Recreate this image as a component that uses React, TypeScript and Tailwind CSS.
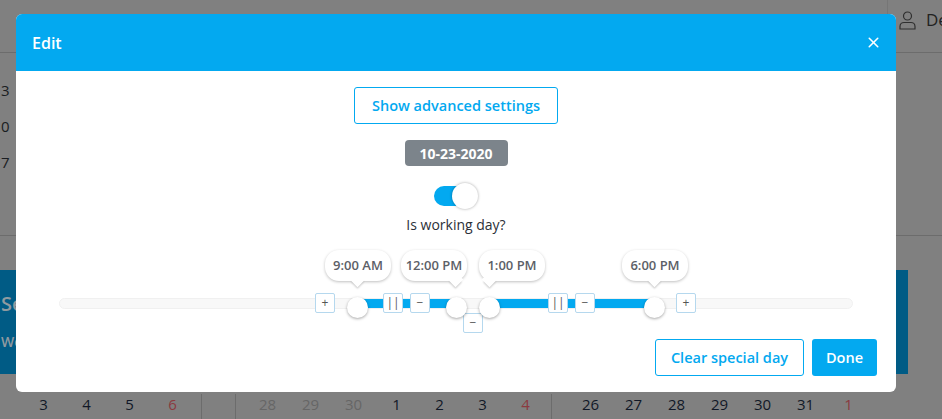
import { X } from "lucide-react";

const weekA = ["3", "0", "7"];
const daysLeft = [
  { n: "2", x: "left-[-2px]" },
  { n: "3", x: "left-[38px]" },
  { n: "4", x: "left-[81px]" },
  { n: "5", x: "left-[124px]" },
];

function Day({ n, cls }: { n: string; cls?: string }) {
  return <span className={"w-[43px] text-center " + (cls ?? "text-[#111827]")}>{n}</span>;
}

function Background() {
  return (
    <div className="flex h-[419px] w-[942px] flex-col overflow-hidden bg-[#808080] text-[15px] text-[#1a1d22]">
      <div className="flex h-[53px] justify-end border-b border-[#6c6c6c]">
        <div className="flex w-[55px] items-start gap-[10px] border-l border-[#767676] pl-[11px] pt-[10px]">
          <svg width="17" height="19" viewBox="0 0 17 19" fill="none" stroke="#2f2f2f" strokeWidth="1.2" className="mt-px shrink-0">
            <circle cx="8.5" cy="5" r="4" />
            <path d="M1 18v-2.5C1 13 3 11.5 5 11.5h7c2 0 4 1.5 4 4V18Z" />
          </svg>
          <span className="text-[17px] leading-[20px] text-[#222]">De</span>
        </div>
      </div>
      <div className="flex h-[183px] flex-col gap-[15px] pt-[27px] border-b border-[#6c6c6c]">
        {weekA.map((d) => (
          <span key={d} className="pl-px leading-[21px]">{d}</span>
        ))}
      </div>
      <div className="h-[34px]" />
      <div className="flex h-[104px] bg-[#005b85]">
        <div className="flex flex-col pl-px pt-[22px] font-semibold text-[#8f9aa0]">
          <span className="text-[20px] leading-[24px]">Se</span>
          <span className="mt-[17px] text-[14px] leading-[18px]">We</span>
        </div>
        <div className="ml-auto h-full w-[34px] bg-[#808080]" />
      </div>
      <div className="flex h-[45px] pt-[20px] leading-[20px]">
        <div className="flex w-[202px] shrink-0 border-r border-[#6c6c6c] pl-[-2px]">
          <Day n="3" cls="ml-[22px] text-[#111827]" />
          <Day n="4" />
          <Day n="5" />
          <Day n="6" cls="text-[#8b3a3f]" />
        </div>
        <div className="flex w-[34px] shrink-0 border-r border-[#6c6c6c]" />
        <div className="flex w-[315px] shrink-0 pl-[10px] text-[#111827]">
          <Day n="28" cls="text-[#666]" />
          <Day n="29" cls="text-[#666]" />
          <Day n="30" cls="text-[#666]" />
          <Day n="1" />
          <Day n="2" />
          <Day n="3" />
          <Day n="4" cls="text-[#8b3a3f]" />
        </div>
        <div className="flex w-[356px] shrink-0 border-l border-[#6c6c6c] pl-[17px] text-[#666]">
          <Day n="26" />
          <Day n="27" />
          <Day n="28" />
          <Day n="29" />
          <Day n="30" />
          <Day n="31" />
          <Day n="1" cls="text-[#8b3a3f]" />
        </div>
      </div>
    </div>
  );
}

function StepButton({ label, x, y }: { label: string; x: string; y: string }) {
  return (
    <button className={"absolute flex h-5 w-5 items-center justify-center rounded-[2px] border border-[#b5d8ee] bg-white text-[12px] font-normal text-[#555] " + x + " " + y}>
      {label}
    </button>
  );
}

function Handle({ x }: { x: string }) {
  return <div className={"absolute top-[283px] h-[21px] w-[21px] rounded-full bg-white shadow-[0_1px_3px_rgba(0,0,0,0.35)] " + x} />;
}

function Bubble({ label, x, tail }: { label: string; x: string; tail: string }) {
  return (
    <div className={"absolute top-[236px] flex h-[31px] w-[66px] items-center justify-center rounded-[14px] bg-white text-[13px] font-semibold text-[#5c6067] shadow-[0_1px_3px_rgba(0,0,0,0.25)] " + x}>
      {label}
      <span className={"absolute top-[24px] h-[11px] w-[11px] rotate-45 bg-white shadow-[2px_2px_2px_-1px_rgba(0,0,0,0.2)] " + tail} />
      <span className="absolute inset-x-3 top-[20px] h-[10px] bg-white" />
    </div>
  );
}

export default function App() {
  return (
    <div className="relative h-[419px] w-[942px] overflow-hidden font-['Open_Sans',sans-serif]">
      <Background />
      {/* modal */}
      <div className="absolute left-[16px] top-[14px] h-[378px] w-[880px] overflow-hidden rounded-[6px] bg-white">
        <div className="flex h-[57px] items-center justify-between bg-[#03a9f0] pl-4 pr-[14px] text-white">
          <span className="text-[16px] font-semibold">Edit</span>
          <X size={17} strokeWidth={2.2} />
        </div>
        <div className="flex flex-col items-center pt-[16px]">
          <button className="h-[37px] w-[204px] rounded-[3px] border border-[#03a9f0] text-[14.5px] font-semibold text-[#03a9f0]">
            Show advanced settings
          </button>
          <div className="mt-[16px] flex h-[26px] w-[103px] items-center justify-center rounded-[4px] bg-[#7c848b] text-[14px] font-bold text-white">
            10-23-2020
          </div>
          <div className="relative mt-[17px] h-[26px] w-[44px]">
            <div className="absolute left-0 top-[3px] h-[20px] w-[40px] rounded-full bg-[#03a9f0]" />
            <div className="absolute left-[18px] top-0 h-[26px] w-[26px] rounded-full bg-white shadow-[0_0_3px_rgba(0,0,0,0.35)]" />
          </div>
          <p className="mt-[5px] text-[14px] text-[#2b3038]">Is working day?</p>
        </div>

        {/* slider */}
        <div className="absolute left-[43px] top-[284px] h-[11px] w-[794px] rounded-full border border-[#f0f0f0] bg-[#f8f8f8]" />
        <div className="absolute left-[341px] top-[285px] h-[9px] w-[99px] bg-[#03a9f0]" />
        <div className="absolute left-[473px] top-[285px] h-[9px] w-[165px] bg-[#03a9f0]" />
        <StepButton label="+" x="left-[299px]" y="top-[279px]" />
        <StepButton label="||" x="left-[367px]" y="top-[279px]" />
        <StepButton label="−" x="left-[394px]" y="top-[279px]" />
        <StepButton label="−" x="left-[447px]" y="top-[299px]" />
        <StepButton label="||" x="left-[532px]" y="top-[279px]" />
        <StepButton label="−" x="left-[559px]" y="top-[279px]" />
        <StepButton label="+" x="left-[660px]" y="top-[279px]" />
        <Handle x="left-[331px]" />
        <Handle x="left-[430px]" />
        <Handle x="left-[463px]" />
        <Handle x="left-[628px]" />
        <Bubble label="9:00 AM" x="left-[309px]" tail="left-[27px]" />
        <Bubble label="12:00 PM" x="left-[385px]" tail="left-[49px]" />
        <Bubble label="1:00 PM" x="left-[463px]" tail="left-[5px]" />
        <Bubble label="6:00 PM" x="left-[606px]" tail="left-[27px]" />

        <div className="absolute right-[19px] top-[325px] flex gap-2">
          <button className="h-[37px] w-[149px] rounded-[3px] border border-[#03a9f0] text-[14.5px] font-semibold text-[#03a9f0]">
            Clear special day
          </button>
          <button className="h-[37px] w-[65px] rounded-[3px] bg-[#03a9f0] text-[14.5px] font-semibold text-white">
            Done
          </button>
        </div>
      </div>
    </div>
  );
}
